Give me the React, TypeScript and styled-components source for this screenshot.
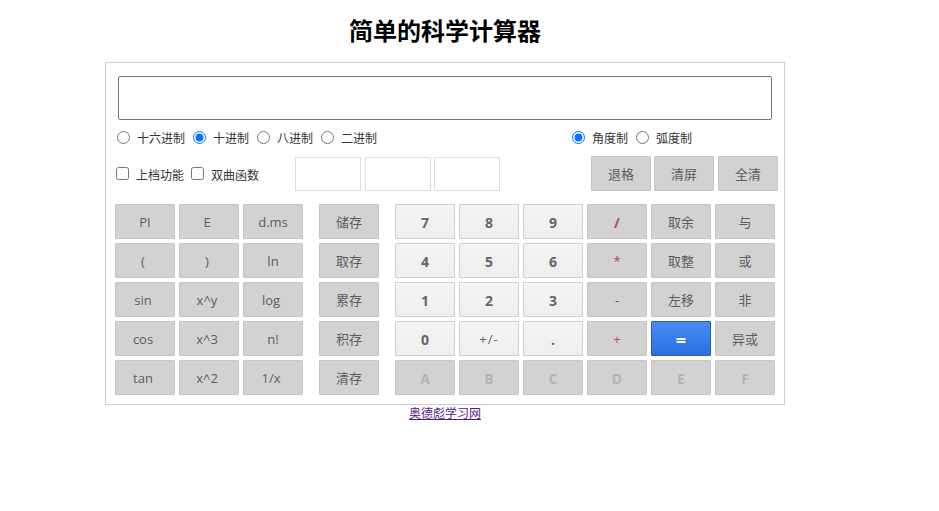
import React from "react";
import styled, { createGlobalStyle, css } from "styled-components";

const Global = createGlobalStyle`
  html, body { margin: 0; padding: 0; background: #fff; }
  body { font-family: "Open Sans", "Noto Sans CJK SC", sans-serif; font-size: 12px; color: #222; }
`;

const Page = styled.div`
  width: 680px;
  margin-left: 105px;
  height: 511px;
`;
const Title = styled.h1`
  margin: 0;
  padding-top: 16px;
  height: 62px;
  box-sizing: border-box;
  font: 700 24px/32px "Liberation Sans", "Noto Sans CJK SC", sans-serif;
  color: #000;
  text-align: center;
`;
const Panel = styled.div`
  box-sizing: border-box;
  width: 680px;
  height: 343px;
  border: 1px solid #ccc;
  padding: 13px 6px 0 9px;
`;
const Display = styled.div`
  box-sizing: border-box;
  width: 654px;
  height: 44px;
  margin-left: 3px;
  border: 1px solid #767676;
  border-radius: 2px;
  background: #fff;
`;
const OptionRow = styled.div`
  display: flex;
  align-items: center;
  justify-content: space-between;
  height: 20px;
  margin-top: 7px;
  width: 577px;
`;
const OptionGroup = styled.div`
  display: flex;
  align-items: center;
  gap: 6px;
`;
const Option = styled.label`
  display: inline-flex;
  align-items: center;
  font-size: 12px;
  line-height: 16px;
  color: #333;
  white-space: nowrap;
`;
const Caption = styled.span`
  margin-left: 7px;
  margin-top: 4px;
`;
const Radio = styled.input.attrs({ type: "radio" })`
  width: 13px;
  height: 13px;
  margin: 0 0 0 2px;
`;
const Check = styled.input.attrs({ type: "checkbox" })`
  width: 13px;
  height: 13px;
  margin: 0 0 0 1px;
`;
const ToolRow = styled.div`
  display: flex;
  align-items: center;
  height: 35px;
  margin-top: 9px;
`;
const ChecksGroup = styled.div`
  display: flex;
  align-items: center;
  gap: 6px;
`;
const Memos = styled.div`
  display: flex;
  gap: 4px;
  margin-left: 36px;
  & > :last-child {
    margin-left: -1px;
  }
`;
const Memo = styled.div`
  box-sizing: border-box;
  width: 66px;
  height: 34px;
  border: 1px solid #ddd;
  background: #fff;
`;
const Tools = styled.div`
  display: flex;
  gap: 3px;
  margin-left: auto;
  & > :last-child {
    margin-left: 1px;
  }
`;
const Pads = styled.div`
  display: flex;
  margin-top: 13px;
`;
const Grid = styled.div<{ $cols: number; $ml?: number }>`
  display: grid;
  grid-template-columns: repeat(${(p) => p.$cols}, 60px);
  grid-auto-rows: 35px;
  gap: 4px;
  margin-left: ${(p) => p.$ml ?? 0}px;
`;
type Kind = "fn" | "num" | "sym" | "op" | "slash" | "eq" | "off";
const Key = styled.button<{ $kind?: Kind; $nudge?: number }>`
  box-sizing: border-box;
  width: 60px;
  height: 35px;
  margin: 0;
  padding: 2px ${(p) => p.$nudge ?? 0}px 0 0;
  border: 1px solid #c6c6c6;
  border-radius: 1px;
  background: #d2d2d2;
  color: #5c5c5c;
  font: 400 13px/1 "Open Sans", "Noto Sans CJK SC", sans-serif;
  ${(p) =>
    p.$kind === "num" &&
    css`
      background: linear-gradient(#f4f4f4, #eeeeee);
      border-color: #cfcfcf;
      color: #666;
      font-size: 14px;
      font-weight: 700;
    `}
  ${(p) =>
    p.$kind === "sym" &&
    css`
      background: linear-gradient(#f4f4f4, #eeeeee);
      border-color: #cfcfcf;
      color: #666;
      letter-spacing: 1px;
    `}
  ${(p) =>
    p.$kind === "op" &&
    css`
      color: #a5505a;
    `}
  ${(p) =>
    p.$kind === "slash" &&
    css`
      color: #a5505a;
      font-size: 14px;
      font-weight: 700;
    `}
  ${(p) =>
    p.$kind === "eq" &&
    css`
      background: linear-gradient(#4a8af4, #2a6fe0);
      border-color: #2a5db5;
      color: #fff;
      font-size: 18px;
      font-weight: 700;
    `}
  ${(p) =>
    p.$kind === "off" &&
    css`
      color: #b4b4b4;
      font-size: 14px;
      font-weight: 700;
    `}
`;
const Foot = styled.div`
  text-align: center;
  line-height: 16px;
  padding-top: 1px;
`;
const FootLink = styled.a`
  font-size: 12px;
  color: #551a8b;
  text-decoration: underline;
`;

type K = { t: string; k?: Kind; n?: number };
const left: K[] = [
  { t: "PI" }, { t: "E", n: 4 }, { t: "d.ms" },
  { t: "(", n: 4 }, { t: ")", n: 4 }, { t: "ln" },
  { t: "sin", n: 4 }, { t: "x^y", n: 4 }, { t: "log", n: 4 },
  { t: "cos", n: 4 }, { t: "x^3", n: 4 }, { t: "n!" },
  { t: "tan", n: 4 }, { t: "x^2", n: 4 }, { t: "1/x", n: 4 },
];
const mem: K[] = ["储存", "取存", "累存", "积存", "清存"].map((t) => ({ t }));
const right: K[] = [
  { t: "7", k: "num" }, { t: "8", k: "num" }, { t: "9", k: "num" }, { t: "/", k: "slash" }, { t: "取余" }, { t: "与" },
  { t: "4", k: "num" }, { t: "5", k: "num" }, { t: "6", k: "num" }, { t: "*", k: "op" }, { t: "取整" }, { t: "或" },
  { t: "1", k: "num" }, { t: "2", k: "num" }, { t: "3", k: "num" }, { t: "-" }, { t: "左移" }, { t: "非" },
  { t: "0", k: "num" }, { t: "+/-", k: "sym" }, { t: ".", k: "num" }, { t: "+", k: "op" }, { t: "=", k: "eq" }, { t: "异或" },
  { t: "A", k: "off" }, { t: "B", k: "off" }, { t: "C", k: "off" }, { t: "D", k: "off" }, { t: "E", k: "off" }, { t: "F", k: "off" },
];

const keys = (list: K[]) =>
  list.map((x, i) => (
    <Key key={i} $kind={x.k} $nudge={x.n}>
      {x.t}
    </Key>
  ));

export default function App() {
  return (
    <Page>
      <Global />
      <Title>简单的科学计算器</Title>
      <Panel>
        <Display />
        <OptionRow>
          <OptionGroup>
            <Option><Radio name="base" /><Caption>十六进制</Caption></Option>
            <Option><Radio name="base" defaultChecked /><Caption>十进制</Caption></Option>
            <Option><Radio name="base" /><Caption>八进制</Caption></Option>
            <Option><Radio name="base" /><Caption>二进制</Caption></Option>
          </OptionGroup>
          <OptionGroup>
            <Option><Radio name="unit" defaultChecked /><Caption>角度制</Caption></Option>
            <Option><Radio name="unit" /><Caption>弧度制</Caption></Option>
          </OptionGroup>
        </OptionRow>
        <ToolRow>
          <ChecksGroup>
            <Option><Check /><Caption>上档功能</Caption></Option>
            <Option><Check /><Caption>双曲函数</Caption></Option>
          </ChecksGroup>
          <Memos><Memo /><Memo /><Memo /></Memos>
          <Tools>
            <Key>退格</Key>
            <Key>清屏</Key>
            <Key>全清</Key>
          </Tools>
        </ToolRow>
        <Pads>
          <Grid $cols={3}>{keys(left)}</Grid>
          <Grid $cols={1} $ml={16}>{keys(mem)}</Grid>
          <Grid $cols={6} $ml={16}>{keys(right)}</Grid>
        </Pads>
      </Panel>
      <Foot><FootLink href="#">奥德彪学习网</FootLink></Foot>
    </Page>
  );
}
